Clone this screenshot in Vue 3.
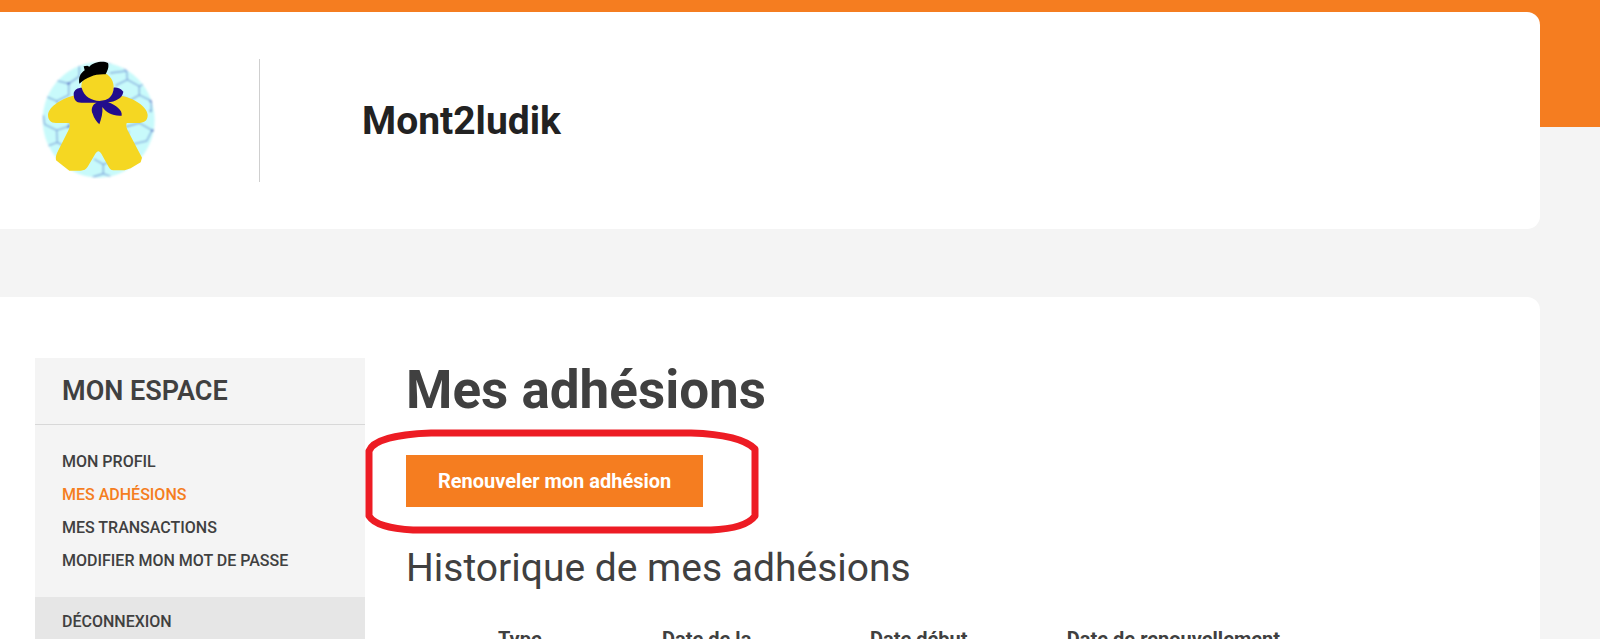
<script setup>
import { ref } from 'vue'

const association = 'Mont2ludik'

const menu = [
  { id: 'profil', label: 'Mon profil' },
  { id: 'adhesions', label: 'Mes adhésions' },
  { id: 'transactions', label: 'Mes transactions' },
  { id: 'mot-de-passe', label: 'Modifier mon mot de passe' }
]

const current = ref('adhesions')

const columns = [
  { key: 'action', label: '' },
  { key: 'type', label: 'Type' },
  { key: 'demande', label: 'Date de la' },
  { key: 'debut', label: 'Date début' },
  { key: 'renouvellement', label: 'Date de renouvellement' }
]
</script>

<template>
  <div class="page">
    <header class="card banner">
      <div class="logo">
        <svg viewBox="30 30 360 360" role="img" aria-label="Logo Mont2ludik">
          <defs>
            <clipPath id="logo-disc">
              <ellipse cx="206" cy="213" rx="168" ry="173" />
            </clipPath>
            <filter id="logo-soft">
              <feGaussianBlur stdDeviation="2" />
            </filter>
            <filter id="logo-edge">
              <feGaussianBlur stdDeviation="3" />
            </filter>
          </defs>
          <g filter="url(#logo-edge)">
            <g clip-path="url(#logo-disc)">
              <rect x="30" y="30" width="360" height="360" fill="#c8fafb" />
              <path
                class="comb"
                d="M78 94L116 104L148 82L148 50M116 104L116 138L80 156L48 142M80 156L84 166M240 72L290 66L270 44L214 40M290 66L292 92L328 112L360 96M292 92L256 110M328 112L328 138L300 154L274 142M328 138L364 156L364 184M40 198L44 226L80 244L116 232L122 206M80 244L82 280L50 292M82 280L104 292M286 234L328 222L328 204M328 222L366 244L384 240M296 246L290 268L306 286L350 276L366 244M188 384L220 374L220 346L192 330M220 374L246 384M220 346L240 338"
              />
              <path class="spots" d="M112 104l8-2M112 234l8-2M362 184v4M364 246l6-2M362 154v6" />
            </g>
          </g>
          <g filter="url(#logo-soft)">
            <!-- pion jaune -->
            <path
              fill="#f5d724"
              d="M154 110C156 86 178 68 204 68C232 68 251 88 251 114C251 136 242 148 226 156L272 140C310 146 352 172 353 198C353 216 342 222 322 222H290C287 230 290 238 294 246L336 326L332 340L302 358L284 364H250C242 364 238 358 234 350L214 314C208 304 202 304 196 314L174 352C168 362 162 365 152 365H118L78 334C76 322 80 314 84 306L116 242C120 234 120 228 118 222H78C62 222 54 212 54 198C56 172 98 146 140 138L180 152C164 144 154 128 154 110Z"
            />
            <!-- foulard -->
            <path
              fill="#23088c"
              d="M155 116C144 116 132 122 131 134C131 152 138 161 154 161L200 161C186 166 182 182 188 194C192 208 200 218 208 226C214 210 219 190 217 174C228 190 248 202 275 200C278 184 258 168 234 160C254 158 278 148 280 128C272 118 262 115 251 116C250 136 240 148 226 153L208 156C186 154 162 144 155 116Z"
            />
            <!-- béret -->
            <path
              fill="#030303"
              d="M148 104C145 86 150 74 164 64L161 52L172 50L178 53C190 40 218 34 234 42C238 54 232 66 227 76C196 74 172 84 148 104Z"
            />
          </g>
        </svg>
      </div>
      <h2 class="association">{{ association }}</h2>
    </header>

    <div class="card content">
      <aside class="sidebar">
        <h3 class="sidebar-title">Mon espace</h3>
        <nav class="menu">
          <a
            v-for="item in menu"
            :key="item.id"
            :href="`#${item.id}`"
            class="menu-link"
            :class="{ active: item.id === current }"
            @click="current = item.id"
          >{{ item.label }}</a>
        </nav>
        <a href="#deconnexion" class="logout">Déconnexion</a>
      </aside>

      <main class="main">
        <h1 class="title">Mes adhésions</h1>
        <div class="renew">
          <button type="button" class="renew-button">Renouveler mon adhésion</button>
          <svg class="highlight" viewBox="0 0 400 112" aria-hidden="true">
            <path
              d="M69 8H329C361 9 383 14 393 24V91C387 99 373 104 349 105H51C28 104 12 99 7 91V26C11 15 36 9 69 8Z"
            />
          </svg>
        </div>
        <h2 class="subtitle">Historique de mes adhésions</h2>
        <table class="history">
          <thead>
            <tr>
              <th v-for="col in columns" :key="col.key" :class="`col-${col.key}`" scope="col">
                {{ col.label }}
              </th>
            </tr>
          </thead>
        </table>
      </main>
    </div>
  </div>
</template>

<style>
body {
  margin: 0;
  background: #f4f4f4;
}
</style>

<style scoped>
.page {
  box-sizing: border-box;
  height: 100vh;
  overflow: hidden;
  padding: 12px 60px 0 0;
  background: linear-gradient(#f57d20 127px, #f4f4f4 127px);
  color: #404040;
  font-family: Roboto, "Liberation Sans", sans-serif;
}

.card {
  background: #fff;
  border-radius: 0 13px 13px 0;
}

/* Bandeau de l'association */
.banner {
  display: flex;
  align-items: center;
  padding: 47px 40px;
  margin-bottom: 68px;
}

.logo {
  box-sizing: border-box;
  width: 220px;
  height: 123px;
  border-right: 1px solid #cfcfcf;
}

.logo svg {
  display: block;
  width: 120px;
  height: 120px;
}

.comb {
  fill: none;
  stroke: #7fa6dc;
  stroke-width: 4;
}

.spots {
  fill: none;
  stroke: #4a5fc0;
  stroke-width: 6;
}

.association {
  margin: 0 0 0 102px;
  color: #222;
  font-size: 39px;
  font-weight: 700;
  line-height: 48px;
}

/* Contenu */
.content {
  display: flex;
  align-items: flex-start;
  gap: 41px;
  padding: 61px 40px 60px 35px;
}

.sidebar {
  flex: 0 0 330px;
  background: #f4f4f4;
  text-transform: uppercase;
}

.sidebar-title {
  margin: 0;
  padding: 16px 27px;
  border-bottom: 1px solid #d8d8d8;
  font-size: 27px;
  font-weight: 600;
  line-height: 34px;
}

.menu {
  display: flex;
  flex-direction: column;
  padding: 20px 27px;
}

.menu-link,
.logout {
  color: inherit;
  font-size: 16px;
  font-weight: 500;
  line-height: 33px;
  text-decoration: none;
}

.menu-link.active {
  color: #f57d20;
}

.logout {
  display: block;
  padding: 8px 27px 24px;
  background: #e6e6e6;
}

.main {
  flex: 1;
  min-width: 0;
}

.title {
  margin: 0;
  font-size: 53px;
  font-weight: 700;
  line-height: 64px;
}

.renew {
  position: relative;
  width: max-content;
  margin: 33px 0 32px;
}

.renew-button {
  display: block;
  padding: 14px 32px;
  border: 0;
  background: #f57d20;
  color: #fff;
  font-family: inherit;
  font-size: 20px;
  font-weight: 700;
  line-height: 24px;
  cursor: pointer;
}

.highlight {
  position: absolute;
  top: -30px;
  left: -44px;
  width: 400px;
  height: 112px;
  pointer-events: none;
}

.highlight path {
  fill: none;
  stroke: #ed1c24;
  stroke-linejoin: round;
  stroke-width: 7;
}

.subtitle {
  margin: 0 0 28px;
  font-size: 39px;
  font-weight: 400;
  line-height: 58px;
}

.history {
  width: 100%;
  border-collapse: collapse;
  table-layout: fixed;
}

.history th {
  padding: 0;
  font-size: 20px;
  font-weight: 700;
  line-height: 28px;
  text-align: left;
}

.history .col-action {
  width: 92px;
}

.col-type {
  width: 15%;
}

.col-demande {
  width: 19%;
}

.col-debut {
  width: 18%;
}
</style>
